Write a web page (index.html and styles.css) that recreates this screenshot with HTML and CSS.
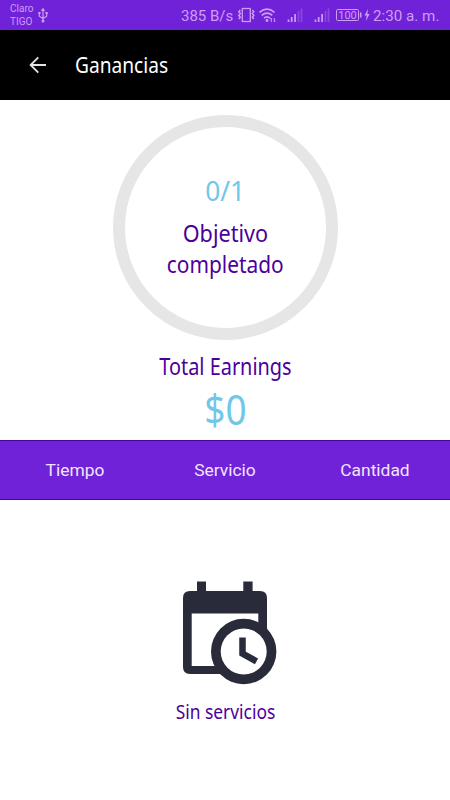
FILE: index.html
```html
<!DOCTYPE html>
<html lang="es">
<head>
<meta charset="utf-8">
<title>Ganancias</title>
<link rel="stylesheet" href="styles.css">
</head>
<body>
<div class="status">
  <div class="carriers"><span>Claro</span><span>TIGO</span></div>
  <svg class="usb" width="10" height="15" viewBox="0 0 10 15" fill="none" stroke="currentColor"><path d="M5 1v12M1.300 5v3.200L5 10.500l3.700-2.300V5M3.500 2.800 5 .8l1.500 2" stroke-width="1.200"/><circle cx="5" cy="13" r="1.500" fill="currentColor" stroke="none"/><path d="M.3 5h2.200M7.500 5h2.200" stroke-width="2.200"/></svg>
  <span class="speed">385 B/s</span>
  <svg class="indicators" width="136" height="30" viewBox="0 0 136 30" fill="none" stroke="currentColor">
    <rect x="5.300" y="8.500" width="8" height="13" stroke-width="1.300"/>
    <path d="m3.300 10-1.500 1.800 1.500 1.800-1.500 1.800 1.500 1.800-1.500 1.800M15.300 10l1.500 1.800-1.500 1.800 1.500 1.800-1.500 1.800 1.500 1.800" stroke-width="1.500"/>
    <path d="M22.500 12.300q7.500-6.500 15 0M24.700 15.300q5.300-4.500 10.600 0M27 18.200q3-2.600 6 0" stroke-width="1.700"/>
    <circle cx="30" cy="20.500" r="1.400" fill="currentColor" stroke="none"/>
    <path d="M34.300 22v-4l-1 1.200M37.300 18v4l1.100-1.200" stroke-width="1"/>
    <path d="M51.500 22v-2.500M54.700 22v-5M58.100 22v-8M78.500 22v-2.500M81.700 22v-5M85.100 22v-8" stroke-width="1.700"/>
    <path d="M61.500 22V11M64.500 22V8.500M88.500 22V11M91.500 22V8.500" stroke-width="1.700" opacity=".3"/>
    <rect x="99.500" y="9.500" width="22" height="11" rx="1.200"/>
    <path d="M123.700 12.500v5" stroke-width="1.600"/>
    <text class="charge" x="110.500" y="19" text-anchor="middle" textLength="18.500" lengthAdjust="spacingAndGlyphs">100</text>
    <path d="m131 9-3.500 6.500h2.200l-.8 5.500 3.700-7h-2.200z" fill="currentColor" stroke="none"/>
  </svg>
  <span class="clock">2:30 a. m.</span>
</div>
<header class="appbar">
  <svg width="18" height="18" viewBox="0 0 18 18" fill="none" stroke="currentColor" stroke-width="1.800"><path d="M17 9H2M9.300 1.300 1.600 9l7.700 7.700"/></svg>
  <h1>Ganancias</h1>
</header>
<main>
  <section class="goal">
    <div class="ring">
      <div class="count"><span>0/1</span></div>
      <div class="label first"><span>Objetivo</span></div>
      <div class="label"><span>completado</span></div>
    </div>
    <div class="total"><span>Total Earnings</span></div>
    <div class="amount"><span>$0</span></div>
  </section>
  <div class="columns"><span>Tiempo</span><span>Servicio</span><span>Cantidad</span></div>
  <section class="empty">
    <svg width="96" height="106" viewBox="0 0 96 106" fill="none">
      <path class="ink" d="M16 1.500h9V11h37.300V1.500h9.300V11H79q7 0 7 7v69q0 7-7 7H9q-7 0-7-7V18q0-7 7-7h7z"/>
      <path fill="#fff" d="M10.700 33.500h66.600V86H10.700z"/>
      <circle class="ink" cx="62.700" cy="71.500" r="32.700"/>
      <circle cx="62.700" cy="71.500" r="23" fill="#fff"/>
      <path class="hands" d="M61.500 57.500v16l14 7.800"/>
    </svg>
    <div class="none"><span>Sin servicios</span></div>
  </section>
</main>
</body>
</html>
```

FILE: styles.css
```css
* { box-sizing: border-box; }
body { margin: 0; width: 450px; height: 800px; overflow: hidden; background: #fff; font-family: "Noto Sans", sans-serif; }
svg { display: block; flex: none; }
.status { height: 30px; display: flex; align-items: center; background: #7022d8; color: #cf9cf5; font-family: Roboto, sans-serif; white-space: nowrap; }
.carriers { display: flex; flex-direction: column; width: 28px; margin-left: 10px; font-size: 10px; line-height: 13.500px; }
.speed { margin-left: 133px; width: 56px; font-size: 15px; padding-top: 1px; }
.charge { font: 11px Roboto, sans-serif; fill: currentColor; stroke: none; }
.clock { font-size: 15.200px; padding-top: 1px; }
.appbar { height: 70px; background: #000; color: #e4e4e4; display: flex; align-items: center; padding-left: 29px; }
.appbar h1 { margin: -3px 0 0 28px; color: #fff; font-size: 22px; font-weight: 400; line-height: 30px; transform: scaleX(.87); transform-origin: left; }
.goal { height: 340px; padding-top: 15px; text-align: center; }
.goal span, .none span { display: inline-block; }
.ring { width: 225px; height: 225px; margin: 0 auto; border: 12px solid #e6e6e6; border-radius: 50%; padding-top: 45px; }
.count { font-size: 28px; line-height: 36px; color: #70c7e8; }
.count span { transform: scaleX(.94); }
.label { font-size: 24px; line-height: 30.500px; color: #4c0099; }
.first { margin-top: 10px; }
.label span { transform: scaleX(.87); }
.first span { transform: scaleX(.9); }
.total { margin-top: 12px; font-size: 23px; line-height: 29px; color: #4c0099; }
.total span { transform: scaleX(.865); }
.amount { font-size: 41px; line-height: 56px; color: #70c7e8; }
.amount span { transform: scaleX(.9); }
.columns { height: 60px; display: grid; grid-template-columns: repeat(3, 1fr); align-items: center; text-align: center; background: #7022d8; border: solid #48059a; border-width: 1px 0; color: #f3e4ff; font: 17.400px Roboto, sans-serif; }
.empty { padding-top: 80px; display: flex; flex-direction: column; align-items: center; }
.empty svg { margin-left: 8px; }
.ink { fill: #292a3a; }
.hands { stroke: #292a3a; stroke-width: 6.500px; }
.none { margin-top: 12px; font-size: 19px; line-height: 28px; color: #4c0099; }
.none span { transform: scaleX(.915); }
```
